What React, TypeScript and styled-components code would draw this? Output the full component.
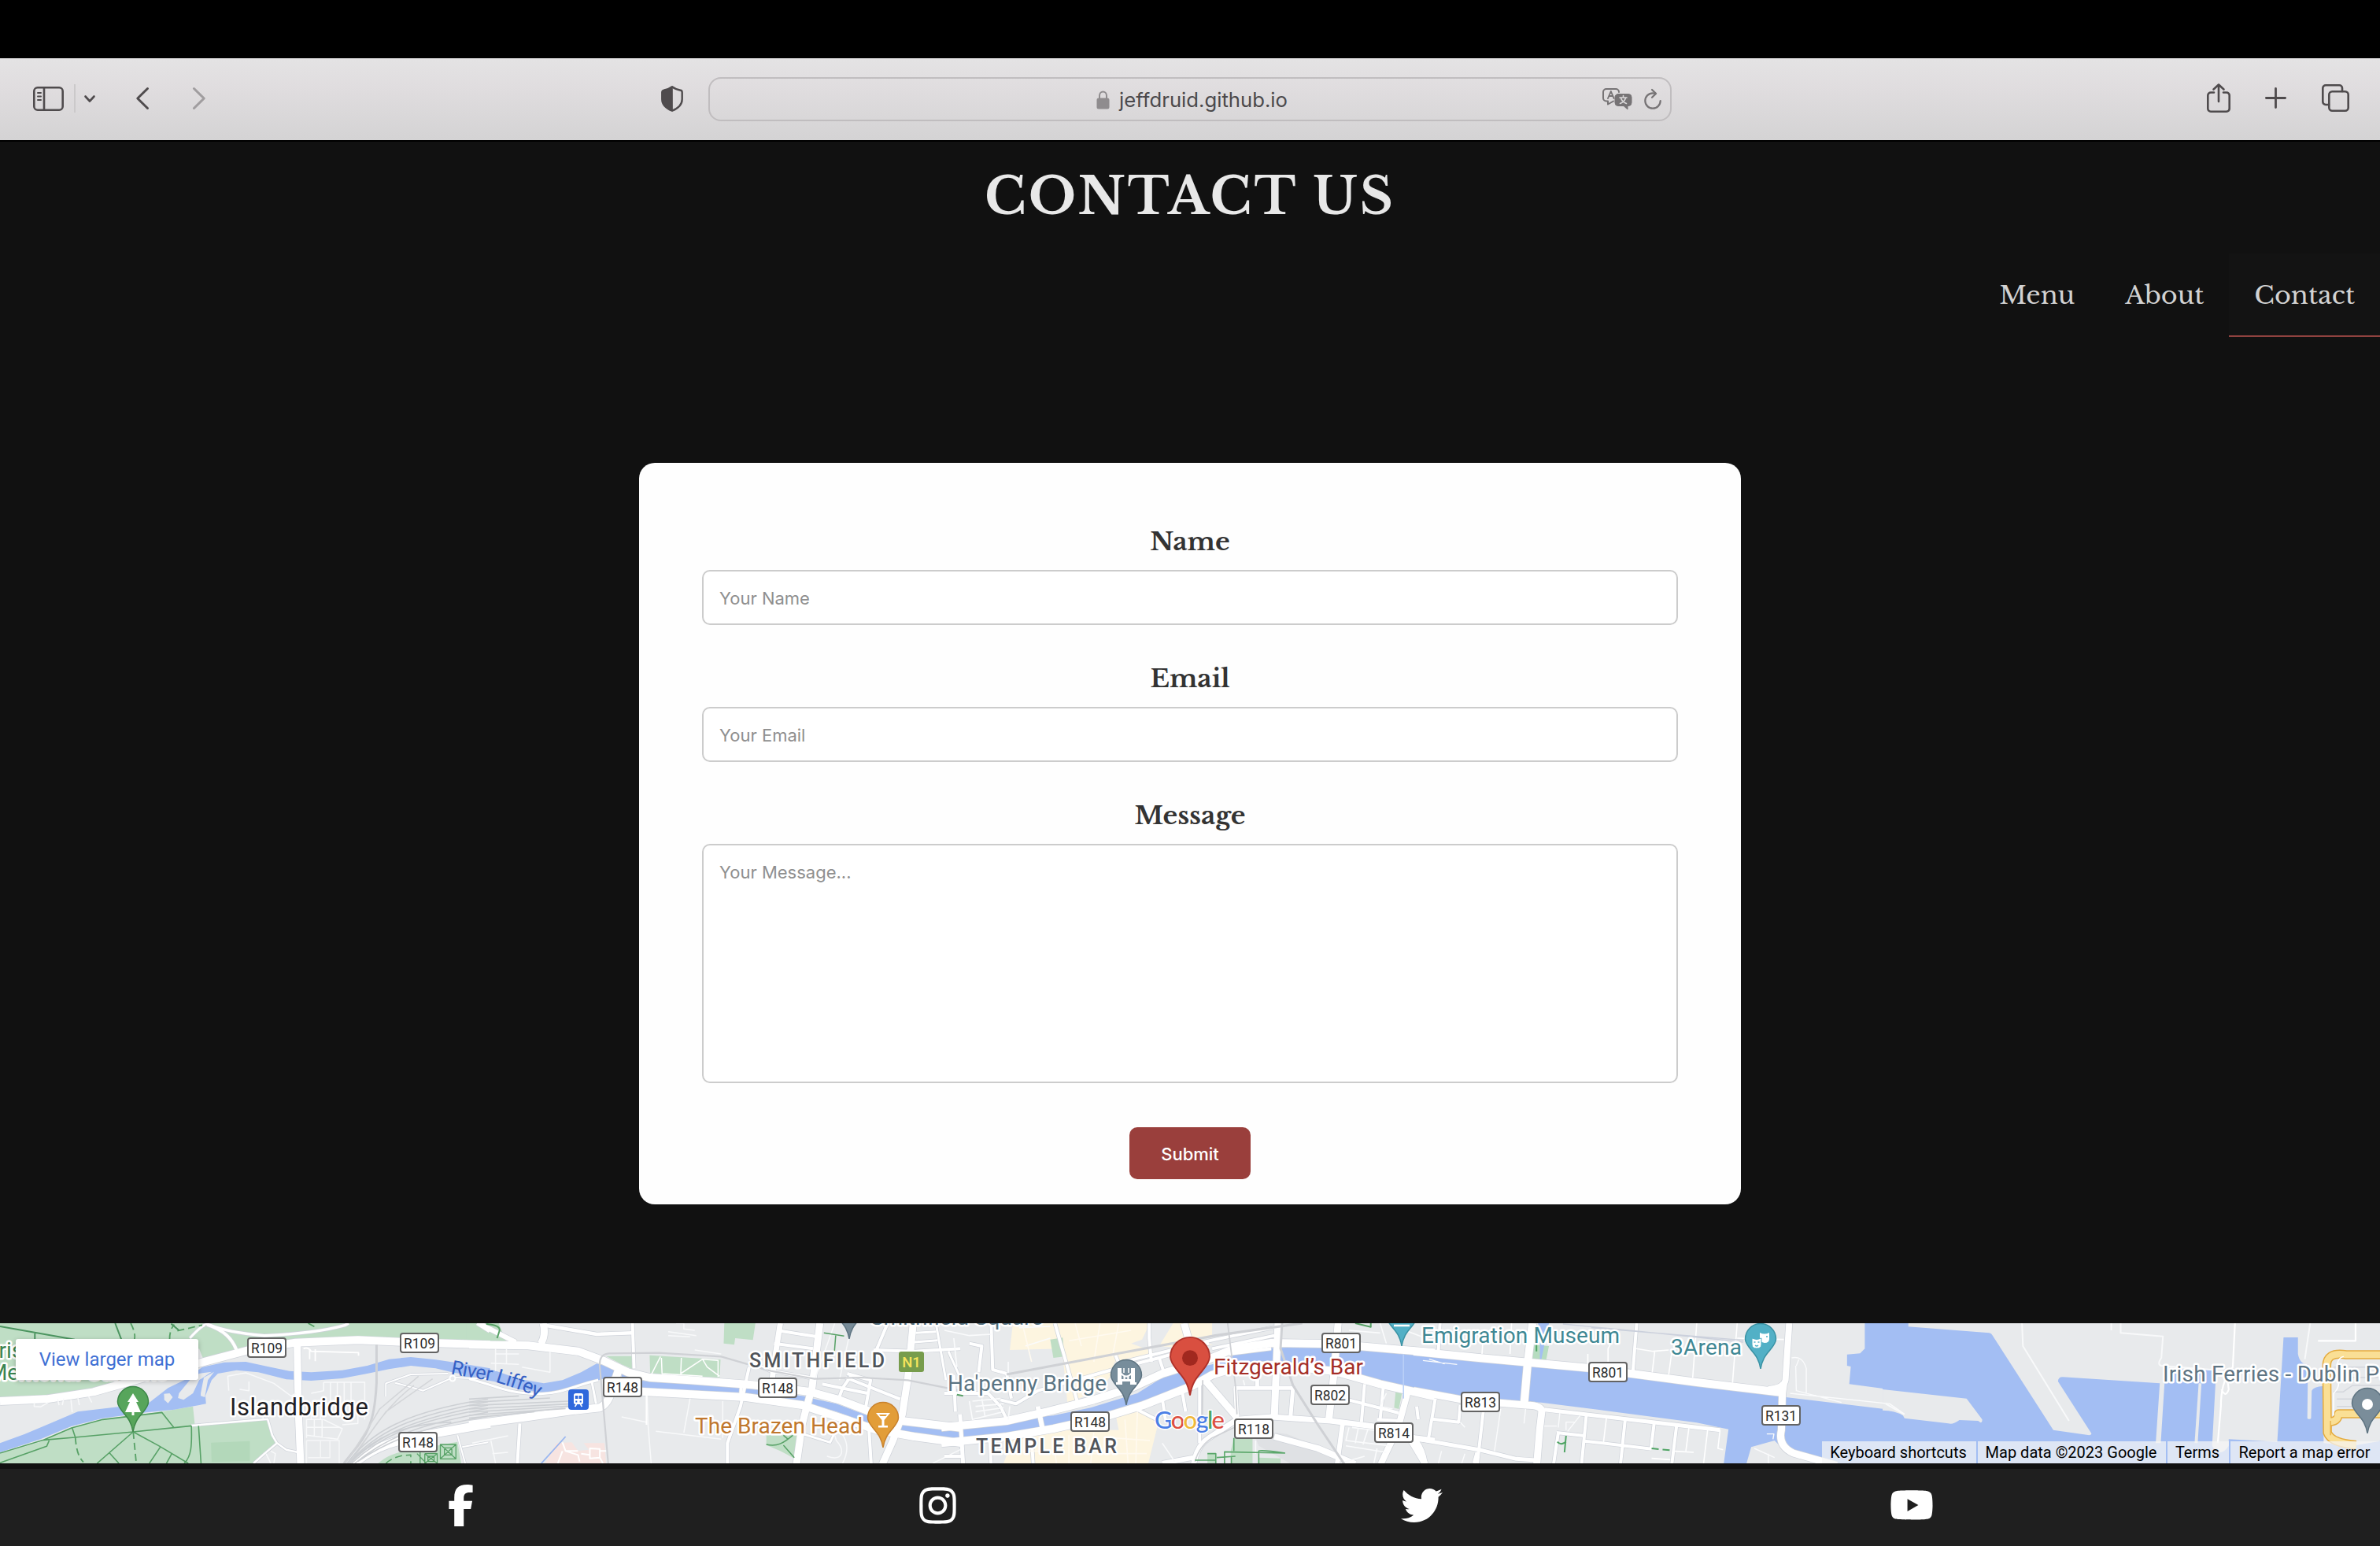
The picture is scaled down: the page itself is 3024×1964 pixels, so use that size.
import React from "react";
import styled, { createGlobalStyle } from "styled-components";
import { FaFacebookF, FaInstagram, FaTwitter, FaYoutube } from "react-icons/fa6";

const serif = `"Libre Baskerville", "Liberation Serif", serif`;
const sans = `Inter, "Liberation Sans", sans-serif`;
const mapSans = `Roboto, "Liberation Sans", sans-serif`;

const GlobalStyle = createGlobalStyle`
  *, *::before, *::after { box-sizing: border-box; }
  html, body { margin: 0; padding: 0; background: #111; }
  body { font-family: ${sans}; overflow: hidden; }
`;

const Screen = styled.div`
  display: flex;
  flex-direction: column;
  width: 3024px;
  height: 1964px;
  background: #111;
  overflow: hidden;
`;

/* ---------- browser chrome ---------- */

const MenuBarGap = styled.div`
  height: 74px;
  flex: none;
  background: #000;
`;

const Toolbar = styled.div`
  flex: none;
  height: 106px;
  display: grid;
  grid-template-columns: 900px 1224px 900px;
  align-items: center;
  background: linear-gradient(#e4e3e4, #e0dddf 35%, #d4d3d4);
  border-bottom: 2px solid #000;
  color: #4f4b4d;
`;

const ToolGroup = styled.div<{ $end?: boolean }>`
  display: flex;
  align-items: center;
  height: 100%;
  justify-content: ${(p) => (p.$end ? "flex-end" : "flex-start")};
  padding: ${(p) => (p.$end ? "0 39px 4px 0" : "0 32px 2px 42px")};
`;

const ToolIcon = styled.svg<{ $left?: number; $dim?: boolean }>`
  flex: none;
  margin-left: ${(p) => p.$left ?? 0}px;
  fill: none;
  stroke: currentColor;
  stroke-linecap: round;
  stroke-linejoin: round;
  overflow: visible;
  color: ${(p) => (p.$dim ? "#a09d9f" : "inherit")};
`;

const ToolDivider = styled.div`
  width: 2px;
  height: 36px;
  margin-left: 13px;
  background: #cbc9ca;
`;

const AddressField = styled.div`
  display: grid;
  grid-template-columns: 120px 1fr 120px;
  align-items: center;
  height: 56px;
  border: 2px solid #c0bdbf;
  border-radius: 16px;
`;

const Address = styled.div`
  grid-column: 2;
  display: flex;
  justify-content: center;
  align-items: center;
  gap: 12px;
  padding: 1px 0 0 5px;
  font-size: 25.7px;
  line-height: 32px;
  color: #4b494b;
`;

const AddressActions = styled.div`
  display: flex;
  justify-content: flex-end;
  align-items: center;
  gap: 15px;
  padding-right: 11px;
  color: #767375;
`;

/* ---------- page header ---------- */

const Title = styled.h1`
  flex: none;
  margin: 0;
  height: 142px;
  text-align: center;
  font: 700 64px/142px ${serif};
  letter-spacing: 3.2px;
  color: #e8e8e8;
`;

const TitleText = styled.span`
  display: block;
  margin-top: -1px;
`;

const Nav = styled.nav`
  flex: none;
  display: flex;
  justify-content: flex-end;
  height: 106px;
`;

const NavLink = styled.a<{ $active?: boolean }>`
  display: flex;
  align-items: center;
  padding: 2px 32px 0;
  font: 400 32px/40px ${serif};
  color: #d2d2d2;
  background: ${(p) => (p.$active ? "#131313" : "transparent")};
  border-bottom: 2px solid ${(p) => (p.$active ? "#8f423f" : "transparent")};
`;

/* ---------- form ---------- */

const Card = styled.form`
  flex: none;
  align-self: center;
  display: flex;
  flex-direction: column;
  align-items: center;
  width: 1400px;
  height: 942px;
  margin-top: 160px;
  padding: 75px 80px 0;
  border-radius: 20px;
  background: #fefefe;
`;

const Field = styled.label`
  display: flex;
  flex-direction: column;
  align-items: center;
  gap: 9px;
  width: 100%;
  margin-bottom: 43px;
`;

const FieldName = styled.span`
  font: 700 32px/51px ${serif};
  height: 52px;
  color: #333;
`;

const TextInput = styled.input`
  display: block;
  width: 100%;
  height: 70px;
  padding: 2px 20px 0;
  border: 2px solid #ccc;
  border-radius: 10px;
  background: #fff;
  font: 400 22px/28px ${sans};
  &::placeholder { color: #8f8f8f; opacity: 1; }
`;

const TextArea = styled.textarea`
  display: block;
  width: 100%;
  height: 304px;
  padding: 20px;
  border: 2px solid #ccc;
  border-radius: 10px;
  background: #fff;
  resize: none;
  font: 400 22px/28px ${sans};
  &::placeholder { color: #8f8f8f; opacity: 1; }
`;

const SubmitButton = styled.button`
  width: 154px;
  height: 66px;
  margin-top: 13px;
  padding: 2px 0 0;
  border: 0;
  border-radius: 10px;
  background: #9a3f3c;
  color: #fff;
  font: 500 22px/28px ${sans};
`;

/* ---------- map ---------- */

const MapFrame = styled.section`
  position: relative;
  flex: none;
  height: 178px;
  margin-top: 151px;
  overflow: hidden;
  background: #e8eaec;
`;

const MapCanvas = styled.svg`
  display: block;
  width: 3024px;
  height: 178px;
`;

const LargerMap = styled.a`
  position: absolute;
  left: 20px;
  top: 20px;
  width: 232px;
  height: 52px;
  display: flex;
  align-items: center;
  justify-content: center;
  border-radius: 3px;
  background: #fff;
  box-shadow: 0 2px 6px rgba(0, 0, 0, 0.25);
  color: #3f70d4;
  font: 400 24px/1 ${mapSans};
`;

const Attribution = styled.div`
  position: absolute;
  right: 0;
  bottom: 0;
  display: flex;
  gap: 2px;
  height: 28px;
`;

const Credit = styled.span<{ $width: number }>`
  display: flex;
  align-items: center;
  justify-content: center;
  width: ${(p) => p.$width}px;
  background: rgba(245, 245, 245, 0.72);
  color: #000;
  white-space: nowrap;
  padding: 0 2px 1px 0;
  font: 400 20px/26px ${mapSans};
`;

const Area = styled.path<{ $fill: string }>`
  fill: ${(p) => p.$fill};
`;

const Line = styled.path<{ $w: number; $color: string; $dash?: boolean }>`
  fill: none;
  stroke: ${(p) => p.$color};
  stroke-width: ${(p) => p.$w}px;
  stroke-linejoin: round;
  stroke-dasharray: ${(p) => (p.$dash ? "9 5" : "none")};
  vector-effect: non-scaling-stroke;
`;

const PlaceLabel = styled.text<{ $color: string; $size?: number; $weight?: number }>`
  font-family: ${mapSans};
  font-size: ${(p) => p.$size ?? 28}px;
  font-weight: ${(p) => p.$weight ?? 400};
  fill: ${(p) => p.$color};
  stroke: #fff;
  stroke-width: 5px;
  stroke-linejoin: round;
  paint-order: stroke;
`;

const RiverLabel = styled(PlaceLabel)`
  stroke: none;
`;

const GoogleMark = styled(PlaceLabel)`
  font-family: Lato, sans-serif;
  stroke-width: 3px;
`;

const ShieldText = styled.text<{ $fill?: string }>`
  font: ${(p) => (p.$fill ? 500 : 400)} 18.5px ${mapSans};
  fill: ${(p) => p.$fill ?? "#2b2b2b"};
  text-anchor: middle;
`;

const GREEN = "#bfdec5";
const WATER = "#a3bef3";
const LAND = "#e8eaec";
const SHOP = "#fdf5e0";
const PATH = "#57a166";
const RAIL = "#cfd1d5";

type Shape = [fill: string, d: string];
type Road = [width: number, d: string];
type Detail = [width: number, color: string, d: string, dash?: boolean];
interface Tile {
  x: number;
  sx: number;
  areas: Shape[];
  roads: Road[];
  details: Detail[];
}

const S = 620 / 1568;

const tiles: Tile[] = [
  {
    x: 0,
    sx: S,
    areas: [
      [GREEN, "M0 33H1568V100L1150 90L950 100L800 130L640 180L450 235L300 285L150 312L0 318Z"],
      [LAND, "M600 150L640 130L655 175L600 195Z"],
      [GREEN, "M0 530L130 485L230 430L330 400L430 385L520 370L620 350L626 420L860 398L870 450L885 490L850 530L815 567H0Z"],
      ["#b3d8ba", "M678 488L803 482V558L680 562Z"],
      [GREEN, "M1215 567C1240 540 1280 520 1330 515L1470 485L1482 567Z"],
      [WATER, "M0 490L80 455L170 410L250 370L390 350L480 335L540 280L600 245L650 200L720 182L790 180L860 198L930 215L1000 220L1100 212L1180 195L1250 170L1320 162L1400 172L1460 182L1575 205V240L1460 222L1400 205L1320 195L1250 208L1180 225L1100 243L1000 252L920 247L830 220L760 212L700 225L680 250L660 310L662 340L560 362L470 373L330 395L230 425L130 475L0 525Z"],
      [LAND, "M575 300L610 250L640 225L680 218L640 250L620 300L590 325L572 318Z"],
      [LAND, "M527 302L545 300L555 315L540 338L528 325Z"],
      [LAND, "M645 300L655 240L688 218L668 250L658 315L645 310Z"],
    ],
    roads: [
      [10, "M0 330L150 322L300 295L450 245L640 185L800 135L950 107L1150 97L1300 105L1575 115"],
      [9, "M955 105L957 250L960 400L966 570"],
      [11, "M1130 575C1200 500 1280 475 1400 452L1575 415"],
      [3.5, "M660 33C700 55 760 72 850 80C950 75 1050 60 1110 40L1120 33"],
      [4, "M665 38C720 60 745 90 760 135"],
      [3, "M610 90C625 70 640 50 660 38"],
      [7, "M1535 30L1575 60"],
      [2.5, "M615 423L860 398L875 460L890 490L920 515L958 525"],
      [2.5, "M890 490L850 530L815 567"],
      [2, "M1440 225L1320 228L1240 262V312"],
      [2, "M1455 240L1568 245M1455 240L1360 290L1270 260"],
      [2, "M1470 460L1495 567M1485 505L1568 487"],
    ],
    details: [
      [1.8, "#fff", "M975 130Q990 122 1000 140L1152 145V157M995 130V170M1013 132V178"],
      [1.5, "#f8f9fa", "M735 290L732 235L790 222L880 262L935 310L952 300M800 255V290L770 285M845 398L850 330L900 340V395"],
      [1.5, "#f8f9fa", "M1040 258H1172V400M1040 258V290L1000 300M1062 258V330M1084 258V330M1106 258V330M1128 258V330M1000 340H1120M1150 330V415L1100 420M985 400H1040L1100 435L1085 475L985 460ZM985 400V470M1010 400V465M1035 400V470M985 430H1090M1000 340V400M1030 340V400"],
      [1.5, "#f5f6f7", "M985 480H1090V567M985 480V567M1030 545V480M1060 480V545H990"],
      [1.5, "#f8f9fa", "M110 335V350L130 352L155 335M190 345L185 322M200 345L205 320M232 372L228 325M255 345L250 315M295 335L285 312"],
      [1.5, "#f8f9fa", "M880 567L885 530L870 520M870 567L855 530"],
      [3, RAIL, "M1210 115V260C1205 380 1190 440 1150 500L1105 567"],
      [1.5, "#d3d5d8", "M1110 567C1180 440 1200 400 1220 360L1345 235M1118 567C1190 450 1210 420 1240 370L1390 245M1125 567C1190 450 1240 350 1330 270"],
      [1.6, "#cdd0d4", "M1115 567C1190 450 1300 370 1568 322M1120 567C1210 445 1320 385 1568 332M1125 567C1220 450 1340 395 1568 345M1130 567C1230 455 1340 405 1568 358M1140 567C1250 460 1360 415 1568 372M1150 560C1260 470 1380 425 1568 388M1130 560C1200 470 1280 420 1450 410"],
      [1.6, PATH, "M0 528L140 478L230 432L330 400L520 373L558 430M0 565L150 502L158 480M140 478L240 468L428 447L615 424M232 432L242 468M428 447L312 567M350 525L382 567M428 447L510 500L605 567M515 505L480 567M552 530L535 567M615 424C617 500 615 540 592 567M638 424L646 567"],
      [1.8, PATH, "M242 468C245 510 250 540 268 562M428 447L438 567M420 33C432 60 435 80 432 95M545 95C545 70 550 50 560 38M570 62L650 40M990 33L1020 52", true],
      [2, "#4c9560", "M0 45L240 95M112 72V95M370 33L390 95M550 35L575 60"],
      [1.3, PATH, "M1340 530L1370 567M1350 520V567M1365 530H1405V567M1365 530V567M1365 530L1405 567M1405 530L1365 567M1375 540H1395V560H1375ZM1415 495H1465V550H1415ZM1415 495L1465 550M1465 495L1415 550M1428 508H1452V535H1428Z"],
      [1.5, PATH, "M1240 567C1260 545 1290 535 1320 535V567", true],
    ],
  },
  {
    x: 600,
    sx: S,
    areas: [
      [GREEN, "M-20 33H85L110 105L-20 100Z"],
      [GREEN, "M810 33H910L902 97L845 90L842 115L808 110Z"],
      [GREEN, "M570 155L798 172L795 240L572 228Z"],
      [GREEN, "M430 158H515V208L480 190Z"],
      [GREEN, "M945 460H1045L1035 548L990 520L945 497Z"],
      ["#f7e4e1", "M270 490L320 487L340 520L375 515L358 490H425L430 567H235Z"],
      [WATER, "M-30 200L70 212L150 245L230 262L290 250L350 220L400 187L460 205L450 235L400 252L340 275L290 292L230 298L150 285L70 255L-30 235Z"],
      [WATER, "M480 225L540 252L700 262L860 275L1072 312L1070 338L900 305L700 292L545 280L480 245Z"],
      [WATER, "M1095 320L1170 340L1270 385L1380 418L1575 445V478L1365 450L1270 412L1170 370L1092 342Z"],
    ],
    roads: [
      [4.5, "M228 40L400 75L515 70"],
      [4, "M515 33L520 205"],
      [4, "M153 415L145 570"],
      [4, "M990 62L1110 85M970 110L1095 130M900 185L960 215L1085 240"],
      [4, "M890 200L862 350L820 490V570"],
      [4, "M1200 240L1375 322M1205 225L1280 250L1265 350M1125 265L1270 300M1175 330L1190 280L1220 230"],
      [4, "M1290 135L1420 140L1568 130M1335 33L1290 160M1330 33H1335"],
      [3, "M1490 33L1522 250M1425 70L1490 65M1420 105L1495 98M1530 140L1568 240"],
      [4, "M1275 440L1282 570"],
      [3, "M1062 455L1150 487L1165 450M1110 430L1180 420"],
      [3, "M385 260L398 340M-10 245C80 270 100 300 220 302C290 300 330 270 405 250"],
      [7, "M990 33L972 170L962 265"],
      [9, "M228 33Q238 80 220 112"],
      [6, "M20 33L140 105"],
      [9, "M1117 33L1092 280L1075 350L1060 420L1042 570"],
      [9, "M1417 33L1400 240L1382 380L1352 480L1318 570"],
      [10, "M-10 115L180 118L340 140L420 175L500 220L570 240L700 250L900 268L1080 293L1180 325L1290 375L1380 405L1575 432"],
      [10, "M-10 420L180 390L330 365L410 355Q435 340 445 300L472 205"],
      [10, "M440 285L560 295L880 315L1060 345L1200 400L1300 440L1420 465L1575 490"],
      [4, "M865 265L862 320"],
    ],
    details: [
      [1.5, "#f8f9fa", "M75 130V215M60 185L150 190M110 130V190M75 150H150M250 140V220L160 200M630 65L720 80M630 80L700 85M715 135L800 150M480 390L560 410M590 445L800 475M562 310L565 420L575 567M700 320L680 450M805 330V470M1140 540C1190 560 1200 520 1170 480L1165 460M1185 450Q1220 500 1190 567M0 490L115 462M60 480L75 567M65 530L115 525M1165 33L1100 250M1210 90L1180 250M655 33H680V55L715 60M1568 515L1480 567"],
      [1.5, "#fff", "M575 230L605 160M608 165L610 225L740 235M672 165L670 225L740 170L790 175V238M740 170L755 200L795 235"],
      [2, "#fff", "M290 487L300 520L340 535L345 560M290 520L275 567M300 520H340M378 510L410 512L410 545L378 548ZM410 520H432M350 530L378 535M410 545L420 567M560 295V420"],
      [1.5, PATH, "M1130 70L1195 82M1168 80L1164 140M945 495C980 505 1000 490 1030 460M1000 498L1035 545M1000 460L1015 475"],
      [1.8, "#98b6f0", "M222 567L300 465"],
      [2.2, RAIL, "M437 567L410 200Q406 150 440 148L600 146L800 160L960 215L1100 245L1250 240L1400 250L1568 290"],
      [1.6, "#cdd0d4", "M-10 322L150 310M-10 335L250 318M-10 347L310 330M-10 360L320 340M-10 372L320 348M-10 384L300 358M-10 395L200 370"],
      [2, PATH, "M45 36Q90 40 88 60L80 90"],
    ],
  },
  {
    x: 1200,
    sx: S,
    areas: [
      [SHOP, "M220 33H660L635 95L600 110L670 140V160L545 182V215L500 290L395 335L378 130L210 135Z"],
      [SHOP, "M735 33H860V80L820 100L862 115L790 130L690 120Z"],
      [SHOP, "M550 380L600 350L690 400L655 567H190L220 470L300 440L560 440Z"],
      [GREEN, "M340 95L380 88L386 160L350 165Z"],
      [GREEN, "M930 470H990V567H920V520Z"],
      [GREEN, "M845 530H872L870 567H845ZM1010 545L1080 548V567H1010Z"],
      [GREEN, "M1450 292L1470 300L1460 360L1445 355Z"],
      ["#dfe1e4", "M990 440L1100 455L1260 530L1300 567H1110L1010 500Z"],
      [WATER, "M-10 445L200 400L350 385L470 355L620 300L700 240L760 215L860 190L940 150L1050 128L1240 120L1400 138L1575 152V312L1400 252L1260 205L1060 185L940 190L860 230L790 265L700 320L560 375L400 425L200 455L-10 485Z"],
    ],
    roads: [
      [4, "M355 33L400 220L430 345"],
      [4, "M550 155L560 185L850 100L1060 48"],
      [4, "M180 325L230 340L300 290L540 210L690 165L850 110M690 165L708 230"],
      [4, "M200 225L215 320M180 350L200 400M0 300L140 300L180 350"],
      [4, "M150 33L155 210L200 225M80 110L120 120L110 220M30 230L35 370"],
      [5, "M50 380L60 570"],
      [4, "M658 33V90L665 180"],
      [5, "M930 280H1120L1112 392M1005 240V280M935 280L940 392"],
      [4, "M765 300L775 370M820 250V490M700 320L710 400M600 350L690 405"],
      [4, "M915 150L1050 130M860 130L1060 80"],
      [4, "M145 470L150 567M280 470L285 567M0 540H60"],
      [6, "M300 350L317 445"],
      [9, "M770 33L788 110"],
      [9, "M1072 33L1060 392"],
      [9, "M1265 33L1252 220L1235 405"],
      [9, "M830 240L940 392"],
      [7, "M800 575Q810 500 850 470L940 400L1050 390L1240 405L1420 432L1510 470L1575 480"],
      [8, "M1060 465L1200 510L1320 570"],
      [8, "M1490 290L1458 430L1402 570M1495 470L1545 570"],
      [6, "M1280 410L1262 570M700 567L800 545"],
      [4, "M1350 265L1340 410M1410 280L1400 400M1250 310L1460 375M1390 400L1470 405"],
      [10, "M-10 430L200 405L330 370L480 325L600 280L700 225L850 170L930 130L1050 108L1250 112L1575 145"],
      [10, "M-10 490L200 465L350 435L500 395L640 345L800 270L860 230L940 200L1060 192L1250 215L1400 265L1575 312"],
    ],
    details: [
      [1.6, "#fafbfc", "M205 180V230M0 60L80 80L150 75M30 90L40 200M80 330L90 400L190 370M90 330L180 320M100 350L190 340M100 370L190 355M120 320L130 385M240 50L340 45M260 120L340 90M205 400L210 350M1300 150M1480 60L1568 100M1310 430L1440 450M1300 430L1290 480L1430 500M1330 432L1320 490M1360 440L1345 495M1290 500L1420 525M1380 567L1390 510M1420 300L1400 350L1440 360M1270 567L1350 540M700 490L740 560M960 250L965 270M1000 480V530M1300 60L1400 70M1400 33L1420 110"],
      [1.6, "#fffaf0", "M420 33L440 120M500 33L480 180M560 33L540 160M400 100L600 60M250 33L280 180M580 400L590 567M620 370L615 567M540 470L660 480M480 450L470 567M350 480L360 567M400 460V567M220 520H340M440 530H650"],
      [1.6, "#b9d0f7", "M1475 150V320"],
      [3.2, RAIL, "M200 228L550 150L870 80L1150 33"],
      [3, RAIL, "M1085 33L1080 130L1120 270L1200 420L1285 570"],
      [1.8, RAIL, "M910 33L935 270L940 380M830 250L828 430"],
      [1.6, RAIL, "M805 560Q820 500 860 470L950 420"],
      [1.6, "#5aa76a", "M805 555H870M845 530H872V567M875 545L935 540M900 567V523L1095 528M930 470V520M1010 567V520Q1020 515 1095 528M922 540V567"],
      [2, PATH, "M1320 33L1370 47V33M40 305L60 310"],
    ],
  },
  {
    x: 1800,
    sx: S,
    areas: [
      [WATER, "M-10 152L200 170L400 190L700 240L1000 285L1150 310L1330 335L1540 365Q1560 372 1580 395V600H983L1002 437L900 412L600 365L400 335L200 325L-10 290Z"],
      [WATER, "M1440 33H1580V295L1390 265L1395 198L1383 195V152L1425 148L1440 130Z"],
      [LAND, "M1058 575L1075 505L1150 480L1175 510L1330 575Z"],
      ["#b6dcc0", "M375 115L425 120L415 180L372 172Z"],
      [WATER, "M390 33H425L400 175L396 172V60Z"],
    ],
    roads: [
      [4, "M75 33L70 135M140 345L135 410L50 398M60 320L38 472M0 350L5 400"],
      [4, "M215 360L195 567M450 450L540 462M455 450L440 570M545 385L530 570M670 400L655 570M540 482L755 512M763 415L753 512M835 425L820 570"],
      [4, "M707 33L695 215"],
      [5, "M410 362L700 402L975 440"],
      [5, "M-10 472L200 515L320 550L390 556M195 525L185 567"],
      [8, "M-5 480Q20 520 25 570"],
      [8, "M1197 33L1185 250Q1180 280 1130 285"],
      [9, "M1180 260L1175 300L1172 440Q1160 500 1210 528L1350 575"],
      [10, "M372 33L357 180L345 345"],
      [10, "M-10 140L200 165L550 203L900 258L1180 298"],
      [9, "M-10 290L150 325L350 345Q402 345 402 370L395 440L386 570"],
    ],
    details: [
      [1.6, "#fff", "M900 33L887 240M1030 33L1015 260M550 150V200M640 75L615 130V180M610 392L600 490M875 430L865 520M935 440L922 567M822 520L890 525M755 548L815 553M975 440L968 510L985 515M705 130L760 140L810 135M765 140L757 220M820 140L810 228M305 33L300 150M215 60L210 150M1030 90L1180 95"],
      [1.4, "#fafbfc", "M410 425H450M460 375L455 430M525 385L485 445M480 440V410H510M270 360L250 520M350 360L345 415M140 410L155 430M1205 165Q1240 155 1252 205V300M1220 195L1230 165M1218 195L1220 290L1365 335M1200 300L1520 340L1568 380M1085 510L1150 545M1130 530V567M1125 455H1148L1145 475M80 520L70 567M155 530L145 567M20 175L130 190M40 170L90 188"],
      [1.4, "#cbd0dc", "M470 36L700 62L1050 105M560 50L1050 98"],
      [2, "#4fa464", "M480 462L475 525M452 485Q462 500 480 485M385 115V140"],
      [2, "#4fa464", "M755 510L822 518", true],
    ],
  },
  {
    x: 2400,
    sx: 624 / 1568,
    areas: [
      [WATER, "M-20 38L320 70Q328 72 330 78L525 440L640 460Q650 458 645 450L540 255Q540 238 555 238L865 262L852 490H868L883 205L1045 213L1032 500Q1058 550 1085 500V475L1240 485L1260 87H1306V150Q1312 190 1338 190L1336 395Q1342 402 1348 395L1350 290Q1355 275 1388 272V490L1480 500L1580 480V600H-20Z"],
      [LAND, "M-20 285L248 320L298 400Q298 420 285 405L225 402Q205 420 190 415L50 395L45 385Q20 365 -20 365Z"],
      [LAND, "M989 262H998L986 490H976Z"],
    ],
    roads: [],
    details: [
      [2, "#f8f9fa", "M425 33L428 120L575 405M740 33V70L875 83L870 165Q855 190 870 195L1030 210M1345 33L1328 170M710 33V60M-10 340L48 380"],
      [2.2, "#fff", "M1105 33L1098 200Q1060 250 1060 350L1050 490M1062 285Q1075 320 1085 285L1080 240M1370 100H1490V33"],
      [1.5, "#d3d6dc", "M1420 200H1568M1440 240H1568M1420 295H1450L1480 270H1568M1430 322H1568M1430 350H1500"],
      [11.5, "#e5ab3e", "M1580 153H1460Q1395 140 1398 200L1400 450Q1412 490 1492 497M1402 408Q1435 410 1435 378H1580"],
      [8.5, "#fadf95", "M1580 153H1460Q1395 140 1398 200L1400 450Q1412 490 1492 497M1402 408Q1435 410 1435 378H1580"],
      [1.2, "#e5ab3e", "M1410 405V460"],
      [1.5, "#fff", "M1430 210Q1430 165 1452 160M1420 385V300Q1445 270 1430 245"],
    ],
  },
];

const shields: [string, number, number][] = [
  ["R109", 339, 31],
  ["R109", 533, 25],
  ["R148", 531, 151],
  ["R148", 791, 81],
  ["R148", 988, 82],
  ["R801", 1704, 25],
  ["R802", 1690, 91],
  ["R148", 1385, 125],
  ["R118", 1593, 134],
  ["R814", 1771, 139],
  ["R801", 2043, 62],
  ["R813", 1881, 100],
  ["R131", 2263, 117],
];

interface Label {
  text: string;
  x: number;
  y: number;
  w?: number;
  color: string;
  size?: number;
  weight?: number;
}

const labels: Label[] = [
  { text: "Irish National War", x: -9, y: 44, color: "#3a8551" },
  { text: "Memorial Gardens", x: -15, y: 72, w: 228, color: "#3a8551" },
  { text: "Islandbridge", x: 292, y: 117, w: 176, color: "#1f2023", size: 31 },
  { text: "SMITHFIELD", x: 952, y: 56, w: 172, color: "#50545a", size: 25, weight: 500 },
  { text: "The Brazen Head", x: 883, y: 140, w: 213, color: "#c0782e" },
  { text: "Smithfield Square", x: 1106, y: 2, w: 219, color: "#54707f" },
  { text: "Ha'penny Bridge", x: 1204, y: 86, w: 202, color: "#5a7483" },
  { text: "TEMPLE BAR", x: 1240, y: 165, w: 179, color: "#50545a", size: 25, weight: 500 },
  { text: "Fitzgerald’s Bar", x: 1542, y: 65, w: 190, color: "#a52f28" },
  { text: "Emigration Museum", x: 1806, y: 25, w: 252, color: "#3f8894" },
  { text: "3Arena", x: 2123, y: 40, w: 90, color: "#3f8894" },
  { text: "Irish Ferries - Dublin Port", x: 2748, y: 74, w: 311, color: "#5f7584" },
];

function Pin({ x, y, fill, edge, scale = 1, children }: {
  x: number; y: number; fill: string; edge: string; scale?: number; children?: React.ReactNode;
}) {
  return (
    <g transform={`translate(${x} ${y}) scale(${scale})`}>
      <path
        d="M0 0C-2 -12 -6 -17 -12 -24C-17 -30 -19.500 -34 -19.500 -38A19.500 19.500 0 0 1 19.500 -38C19.500 -34 17 -30 12 -24C6 -17 2 -12 0 0Z"
        fill={fill}
        stroke={edge}
        strokeWidth="1.500"
      />
      {children}
    </g>
  );
}

function CityMap() {
  const place = (t: Tile) => `translate(${t.x} -11) scale(${t.sx} ${1 / 3})`;
  return (
    <MapCanvas viewBox="0 0 3024 178">
      <defs>
        <path id="liffey" d="M572 64C600 70 620 71 640 78C660 84 675 90 700 101" />
      </defs>
      {tiles.map((t) => (
        <g key={t.x} transform={place(t)}>
          {t.areas.map(([fill, d], i) => <Area key={i} $fill={fill} d={d} />)}
        </g>
      ))}
      {tiles.map((t) => (
        <g key={t.x} transform={place(t)}>
          {t.roads.map(([w, d], i) => <Line key={i} $w={w + 1.4} $color="#cfd3da" d={d} />)}
        </g>
      ))}
      {tiles.map((t) => (
        <g key={t.x} transform={place(t)}>
          {t.roads.map(([w, d], i) => <Line key={i} $w={w} $color="#fff" d={d} />)}
          {t.details.map(([w, c, d, dash], i) => <Line key={i} $w={w} $color={c} $dash={dash} d={d} />)}
        </g>
      ))}
      <circle cx="575" cy="70" r="3.500" fill={LAND} stroke="#fff" strokeWidth="2" />

      {shields.map(([name, x, y], i) => (
        <g key={i} transform={`translate(${x} ${y})`}>
          <rect x="-24" y="-12" width="48" height="24" rx="3" fill="#fff" stroke="#636363" strokeWidth="2" />
          <ShieldText y="6.700" textLength="40" lengthAdjust="spacingAndGlyphs">{name}</ShieldText>
        </g>
      ))}
      <g transform="translate(1158 49)">
        <rect x="-16" y="-13" width="32" height="26" rx="3" fill="#779c4c" />
        <ShieldText y="6.700" $fill="#f6e45c">N1</ShieldText>
      </g>

      {labels.map((l) => (
        <PlaceLabel key={l.text} x={l.x} y={l.y} textLength={l.w} $color={l.color} $size={l.size} $weight={l.weight}>
          {l.text}
        </PlaceLabel>
      ))}
      <RiverLabel $color="#3560c4" $size={25}>
        <textPath href="#liffey" textLength="117">River Liffey</textPath>
      </RiverLabel>

      <g transform="translate(722 84)">
        <rect width="26" height="26" rx="4" fill="#2f68dc" />
        <rect x="7" y="5" width="12" height="14" rx="2.500" fill="#fff" />
        <path d="M8.800 8h3.600v4H8.800zM13.600 8h3.600v4h-3.600zM9.300 14.500h2v2h-2zM14.700 14.500h2v2h-2z" fill="#2f68dc" />
        <path d="M8.500 22l2-3M17.500 22l-2-3" stroke="#fff" strokeWidth="1.500" />
      </g>

      <Pin x={169} y={138} fill="#57a55b" edge="#3d8748">
        <path d="M0 -49L7 -38H4L10 -25H1.500V-21H-1.500V-25H-10L-4 -38H-7Z" fill="#fff" />
      </Pin>
      <Pin x={1079} y={20} fill="#778b98" edge="#5d7381" />
      <Pin x={1122} y={158} fill="#e29d38" edge="#c8812c">
        <path d="M-9 -44H9L1.500 -35V-28H6V-25.500H-6V-28H-1.500V-35ZM-5 -42L-3.500 -40H3.500L5 -42Z" fill="#fff" fillRule="evenodd" />
      </Pin>
      <Pin x={1431} y={104} fill="#778d9b" edge="#5d7381">
        <path d="M-11 -47H-6V-41Q0 -34 6 -41V-47H11V-29H13V-26H5V-30H-5V-26H-13V-29H-11ZM-6 -38V-33H-3.500V-36.500ZM-1.300 -35.500V-33H1.300V-35.500ZM6 -38V-33H3.500V-36.500Z" fill="#fff" fillRule="evenodd" />
        <path d="M-3 -47V-41M3 -47V-41" stroke="#fff" strokeWidth="1.500" />
      </Pin>
      <Pin x={1781} y={29} fill="#52b0c6" edge="#3a92a4">
        <path d="M-10 -26H10" stroke="#fff" strokeWidth="2.500" />
      </Pin>
      <Pin x={2237} y={58} fill="#52b0c6" edge="#3a92a4">
        <path d="M-1 -46Q5 -43 11 -46V-38Q11 -33 5 -33Q-1 -34 -1 -38Z" fill="#fff" />
        <path d="M-11 -39Q-5 -36 1 -39V-31Q1 -26 -5 -26Q-11 -26 -11 -31Z" fill="#fff" stroke="#52b0c6" strokeWidth="1" />
        <path d="M-8.500 -34h2M-3.500 -34h2M-7 -30q2 2 4 0M7 -41h2" stroke="#52b0c6" strokeWidth="1.300" fill="none" />
      </Pin>
      <Pin x={3008} y={140} fill="#7a8d9a" edge="#5d7381">
        <circle cy="-37" r="7" fill="#fff" />
      </Pin>
      <Pin x={1512} y={91.500} fill="#d94f40" edge="#b0322a" scale={1.28}>
        <circle cy="-37" r="7.800" fill="#a1281f" />
      </Pin>

      <GoogleMark x="1467" y="134" textLength="89" $color="#4b7fe5" $size={31} $weight={500}>
        <tspan fill="#4b7fe5">G</tspan>
        <tspan fill="#dc4f41">o</tspan>
        <tspan fill="#f0b93a">o</tspan>
        <tspan fill="#4b7fe5">g</tspan>
        <tspan fill="#4ea45f">l</tspan>
        <tspan fill="#dc4f41">e</tspan>
      </GoogleMark>
    </MapCanvas>
  );
}

/* ---------- footer ---------- */

const Footer = styled.footer`
  flex: none;
  display: flex;
  justify-content: space-evenly;
  align-items: center;
  height: 98px;
  margin-top: 7px;
  padding: 0 0 6px 4px;
  background: #1f1f1f;
  color: #fff;
`;

const SocialLink = styled.a<{ $width: number; $size?: number }>`
  display: flex;
  justify-content: center;
  width: ${(p) => p.$width}px;
  svg { flex: none; width: auto; height: ${(p) => p.$size ?? 53}px; }
`;

export default function App() {
  return (
    <Screen>
      <GlobalStyle />
      <MenuBarGap />
      <Toolbar>
        <ToolGroup>
          <ToolIcon width="39" height="31" viewBox="0 0 39 31" strokeWidth="2.6">
            <rect x="1.300" y="1.300" width="36.400" height="28.400" rx="4.500" />
            <path d="M14 1.500V29.500" />
            <path d="M6 8h4M6 12.500h4M6 17h4" strokeWidth="2" />
          </ToolIcon>
          <ToolDivider />
          <ToolIcon $left={11} width="14" height="9" viewBox="0 0 14 9" strokeWidth="2.600">
            <path d="M1.500 1.500L7 7.500L12.500 1.500" />
          </ToolIcon>
          <ToolIcon $left={52} width="16" height="28" viewBox="0 0 16 28" strokeWidth="3">
            <path d="M14.500 1.500L1.800 14L14.500 26.500" />
          </ToolIcon>
          <ToolIcon $left={56} $dim width="16" height="28" viewBox="0 0 16 28" strokeWidth="3">
            <path d="M1.500 1.500L14.200 14L1.500 26.500" />
          </ToolIcon>
          <ToolIcon $left={579} width="28" height="33" viewBox="0 0 28 33" strokeWidth="2.400">
            <path d="M14 1.300C18 4.500 22 5.200 25 5.800C26.400 6.100 26.700 7 26.700 8.500V17C26.700 24 22 28.500 14 31.700C6 28.500 1.300 24 1.300 17V8.500C1.300 7 1.600 6.100 3 5.800C6 5.200 10 4.500 14 1.300Z" />
            <path d="M14 1.300C10 4.500 6 5.200 3 5.800C1.600 6.100 1.300 7 1.300 8.500V17C1.300 24 6 28.500 14 31.700Z" fill="currentColor" strokeWidth="1" />
          </ToolIcon>
        </ToolGroup>
        <AddressField>
          <Address>
            <ToolIcon width="17" height="24" viewBox="0 0 17 24" strokeWidth="2">
              <g stroke="#8f8c8e">
                <path d="M4 10V6.500a4.500 5 0 0 1 9 0V10" />
                <rect x="1.500" y="10.500" width="14" height="12" rx="1.500" fill="#8f8c8e" />
              </g>
            </ToolIcon>
            jeffdruid.github.io
          </Address>
          <AddressActions>
            <ToolIcon width="38" height="28" viewBox="0 0 38 28" strokeWidth="2">
              <path d="M14 16.500L7 20.500V16.500H5A4 4 0 0 1 1 12.500V5A4 4 0 0 1 5 1H17A4 4 0 0 1 21 5" />
              <path d="M7 13L10.800 4L14.600 13M8.500 10H13" strokeWidth="1.900" />
              <path d="M20 7.500H33A4 4 0 0 1 37 11.500V18.500A4 4 0 0 1 33 22.500H32V27L27 22.500H20A4 4 0 0 1 16 18.500V11.500A4 4 0 0 1 20 7.500Z" fill="currentColor" strokeWidth="1" />
              <path d="M22 12H31M26.500 9.500V12M29.500 12.500Q28 17.500 22.500 19.500M23.500 12.500Q25 17.500 30.500 19.500" stroke="#dad8d9" strokeWidth="1.600" />
            </ToolIcon>
            <ToolIcon width="22" height="26" viewBox="0 0 22 26" strokeWidth="2.200">
              <path d="M14 5.700Q12.500 5.300 11 5.300A9.700 9.700 0 1 0 20.700 15" />
              <path d="M10 1L15 5.900L10 10.800" />
            </ToolIcon>
          </AddressActions>
        </AddressField>
        <ToolGroup $end>
          <ToolIcon width="30" height="37" viewBox="0 0 30 37" strokeWidth="2.600">
            <path d="M9 11.500H5A3.700 3.700 0 0 0 1.300 15.200V32A3.700 3.700 0 0 0 5 35.700H25A3.700 3.700 0 0 0 28.700 32V15.200A3.700 3.700 0 0 0 25 11.500H21" />
            <path d="M15 23V1.600M8.500 7.500L15 1.500L21.500 7.500" />
          </ToolIcon>
          <ToolIcon $left={44} width="27" height="27" viewBox="0 0 27 27" strokeWidth="2.800">
            <path d="M13.500 1.400V25.600M1.400 13.500H25.600" />
          </ToolIcon>
          <ToolIcon $left={45} width="35" height="35" viewBox="0 0 35 35" strokeWidth="2.600">
            <rect x="9.300" y="9.300" width="24.400" height="24.400" rx="4" />
            <path d="M9 26H5A3.700 3.700 0 0 1 1.300 22.300V5A3.700 3.700 0 0 1 5 1.300H22.300A3.700 3.700 0 0 1 26 5V9" />
          </ToolIcon>
        </ToolGroup>
      </Toolbar>

      <Title><TitleText>CONTACT US</TitleText></Title>
      <Nav>
        <NavLink>Menu</NavLink>
        <NavLink>About</NavLink>
        <NavLink $active>Contact</NavLink>
      </Nav>

      <Card>
        <Field>
          <FieldName>Name</FieldName>
          <TextInput placeholder="Your Name" />
        </Field>
        <Field>
          <FieldName>Email</FieldName>
          <TextInput placeholder="Your Email" />
        </Field>
        <Field>
          <FieldName>Message</FieldName>
          <TextArea placeholder="Your Message..." />
        </Field>
        <SubmitButton type="button">Submit</SubmitButton>
      </Card>

      <MapFrame>
        <CityMap />
        <LargerMap>View larger map</LargerMap>
        <Attribution>
          <Credit $width={196}>Keyboard shortcuts</Credit>
          <Credit $width={239}>Map data ©2023 Google</Credit>
          <Credit $width={78}>Terms</Credit>
          <Credit $width={190}>Report a map error</Credit>
        </Attribution>
      </MapFrame>

      <Footer>
        <SocialLink $width={34}><FaFacebookF /></SocialLink>
        <SocialLink $width={47}><FaInstagram /></SocialLink>
        <SocialLink $width={54}><FaTwitter /></SocialLink>
        <SocialLink $width={61} $size={56}><FaYoutube /></SocialLink>
      </Footer>
    </Screen>
  );
}
